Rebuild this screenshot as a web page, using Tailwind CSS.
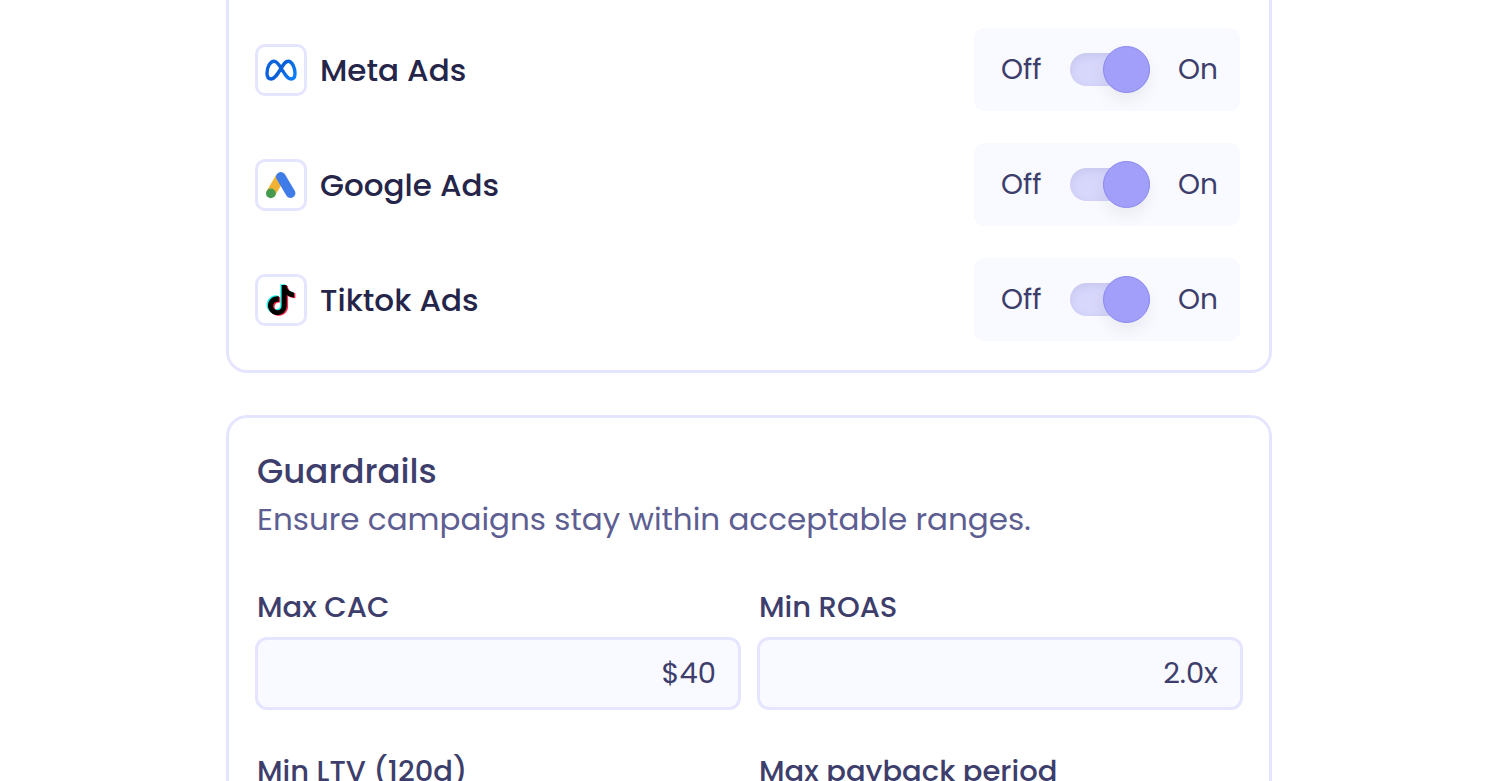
<!DOCTYPE html>
<html lang="en">
<head>
<meta charset="utf-8">
<meta name="viewport" content="width=device-width, initial-scale=1">
<title>Campaign settings</title>
<script src="https://cdn.jsdelivr.net/npm/@tailwindcss/browser@4"></script>
</head>
<body class="bg-white">
<main class="flex h-screen flex-col gap-[42px] overflow-hidden pl-[226px] pr-[229px] font-[Poppins,Inter,sans-serif] text-[#3d3e6b]">

  <section class="shrink-0 rounded-b-[21px] border-x-3 border-b-3 border-[#e6e5ff] pt-7 pr-[29px] pb-[29px] pl-[26px]" aria-label="Channels">
    <ul class="flex flex-col gap-8">
      <li class="flex items-center justify-between">
        <div class="flex items-center gap-[13px]">
          <span class="flex size-[52px] items-center justify-center rounded-[10px] border-3 border-[#e6e5ff]">
            <svg class="h-[22px] w-8" viewBox="0 0 32 22" fill="none" aria-hidden="true">
              <defs><linearGradient id="meta" x1="2" y1="2" x2="30" y2="20" gradientUnits="userSpaceOnUse"><stop stop-color="#0a66e0"/><stop offset=".45" stop-color="#0a5fd8"/><stop offset="1" stop-color="#0b80fa"/></linearGradient></defs>
              <path stroke="url(#meta)" stroke-width="3.4" stroke-linejoin="round" d="M16 9C13.5 4.8 11.8 2.2 9 2.2C5 2.2 2 8.5 2 14C2 18 3.7 20 6.3 20C9.5 20 12 16 16 9.5C19 4.5 20.5 2.2 23.3 2.2C27 2.2 30 8.5 30 14.5C30 18 28.3 20 26 20C22.8 20 20.5 16.5 16 9Z"/>
            </svg>
          </span>
          <span id="meta-name" class="text-[31px] leading-10 font-medium text-[#25254a]">Meta Ads</span>
        </div>
        <label class="flex h-[83px] w-[266px] items-center justify-between rounded-[10px] bg-[#f9faff] pr-[22px] pl-[27px] text-[28px] leading-9">
          <span>Off</span>
          <input type="checkbox" role="switch" checked aria-labelledby="meta-name" class="relative h-[33px] w-20 appearance-none rounded-full bg-[#d7d6fb] shadow-[inset_0_3px_8px_rgba(60,60,120,0.1)] before:absolute before:-top-[7px] before:right-0 before:size-[47px] before:rounded-full before:border before:border-[#8b88f0] before:bg-[#a19ff9] before:shadow-[0_8px_16px_rgba(0,0,0,0.06)] before:content-['']">
          <span>On</span>
        </label>
      </li>
      <li class="flex items-center justify-between">
        <div class="flex items-center gap-[13px]">
          <span class="flex size-[52px] items-center justify-center rounded-[10px] border-3 border-[#e6e5ff]">
            <svg class="h-7 w-[30px]" viewBox="0 0 30 28" fill="none" stroke-linecap="round" aria-hidden="true">
              <path stroke="#f2b335" stroke-width="9.6" stroke-linecap="butt" d="M4.8 22.4L14.5 6"/>
              <path stroke="#407ce8" stroke-width="9.6" d="M14.8 5.8L24.6 22.2"/>
              <circle cx="4.9" cy="22.4" r="4.9" fill="#459a50"/>
            </svg>
          </span>
          <span id="google-name" class="text-[31px] leading-10 font-medium text-[#25254a]">Google Ads</span>
        </div>
        <label class="flex h-[83px] w-[266px] items-center justify-between rounded-[10px] bg-[#f9faff] pr-[22px] pl-[27px] text-[28px] leading-9">
          <span>Off</span>
          <input type="checkbox" role="switch" checked aria-labelledby="google-name" class="relative h-[33px] w-20 appearance-none rounded-full bg-[#d7d6fb] shadow-[inset_0_3px_8px_rgba(60,60,120,0.1)] before:absolute before:-top-[7px] before:right-0 before:size-[47px] before:rounded-full before:border before:border-[#8b88f0] before:bg-[#a19ff9] before:shadow-[0_8px_16px_rgba(0,0,0,0.06)] before:content-['']">
          <span>On</span>
        </label>
      </li>
      <li class="flex items-center justify-between">
        <div class="flex items-center gap-[13px]">
          <span class="flex size-[52px] items-center justify-center rounded-[10px] border-3 border-[#e6e5ff]">
            <svg class="size-8" viewBox="-0.8 -0.8 25.6 25.6" aria-hidden="true">
              <defs><path id="note" d="M12.525.02c1.31-.02 2.61-.01 3.91-.02.08 1.53.63 3.09 1.75 4.17 1.12 1.11 2.7 1.62 4.24 1.79v4.03c-1.44-.05-2.89-.35-4.2-.97-.57-.26-1.1-.59-1.62-.93-.01 2.92.01 5.84-.02 8.75-.08 1.4-.54 2.79-1.35 3.94-1.31 1.92-3.58 3.17-5.91 3.21-1.43.08-2.86-.31-4.08-1.03-2.02-1.19-3.44-3.37-3.65-5.71-.02-.5-.03-1-.01-1.49.18-1.9 1.12-3.72 2.58-4.96 1.66-1.44 3.98-2.13 6.15-1.72.02 1.48-.04 2.96-.04 4.44-.99-.32-2.15-.23-3.02.37-.63.41-1.11 1.04-1.36 1.75-.21.51-.15 1.07-.14 1.61.24 1.64 1.82 3.02 3.5 2.87 1.12-.01 2.19-.66 2.77-1.61.19-.33.4-.67.41-1.06.1-1.79.06-3.57.07-5.36.01-4.03-.01-8.05.02-12.07z"/></defs>
              <use href="#note" x="-1.1" y="-.7" fill="#25f4ee"/>
              <use href="#note" x="1.1" y=".7" fill="#fe2c55"/>
              <use href="#note" fill="#000"/>
            </svg>
          </span>
          <span id="tiktok-name" class="text-[31px] leading-10 font-medium text-[#25254a]">Tiktok Ads</span>
        </div>
        <label class="flex h-[83px] w-[266px] items-center justify-between rounded-[10px] bg-[#f9faff] pr-[22px] pl-[27px] text-[28px] leading-9">
          <span>Off</span>
          <input type="checkbox" role="switch" checked aria-labelledby="tiktok-name" class="relative h-[33px] w-20 appearance-none rounded-full bg-[#d7d6fb] shadow-[inset_0_3px_8px_rgba(60,60,120,0.1)] before:absolute before:-top-[7px] before:right-0 before:size-[47px] before:rounded-full before:border before:border-[#8b88f0] before:bg-[#a19ff9] before:shadow-[0_8px_16px_rgba(0,0,0,0.06)] before:content-['']">
          <span>On</span>
        </label>
      </li>
    </ul>
  </section>

  <section class="shrink-0 rounded-[21px] border-3 border-[#e6e5ff] px-[26px] pt-[29px] pb-8">
    <h2 class="pl-[2px] text-[34px] leading-12 font-medium">Guardrails</h2>
    <p class="pl-[2px] text-[31px] leading-12 text-[#5d5e91]">Ensure campaigns stay within acceptable ranges.</p>
    <div class="mt-11 grid grid-cols-2 gap-x-4 gap-y-[41px]">
      <div class="flex flex-col gap-[10px]">
        <label for="cac" class="pl-[2px] text-[29px] leading-10 font-medium">Max CAC</label>
        <input id="cac" type="text" value="$40" class="h-[73px] w-full rounded-[12px] border-3 border-[#e6e5ff] bg-[#f9faff] px-[22px] text-right text-[29px]">
      </div>
      <div class="flex flex-col gap-[10px]">
        <label for="roas" class="pl-[2px] text-[29px] leading-10 font-medium">Min ROAS</label>
        <input id="roas" type="text" value="2.0x" class="h-[73px] w-full rounded-[12px] border-3 border-[#e6e5ff] bg-[#f9faff] px-[22px] text-right text-[29px]">
      </div>
      <div class="flex flex-col gap-[10px]">
        <label for="ltv" class="pl-[2px] text-[29px] leading-10 font-medium">Min LTV (120d)</label>
        <input id="ltv" type="text" class="h-[73px] w-full rounded-[12px] border-3 border-[#e6e5ff] bg-[#f9faff] px-[22px] text-right text-[29px]">
      </div>
      <div class="flex flex-col gap-[10px]">
        <label for="payback" class="pl-[2px] text-[29px] leading-10 font-medium">Max payback period</label>
        <input id="payback" type="text" class="h-[73px] w-full rounded-[12px] border-3 border-[#e6e5ff] bg-[#f9faff] px-[22px] text-right text-[29px]">
      </div>
    </div>
  </section>
</main>
</body>
</html>
